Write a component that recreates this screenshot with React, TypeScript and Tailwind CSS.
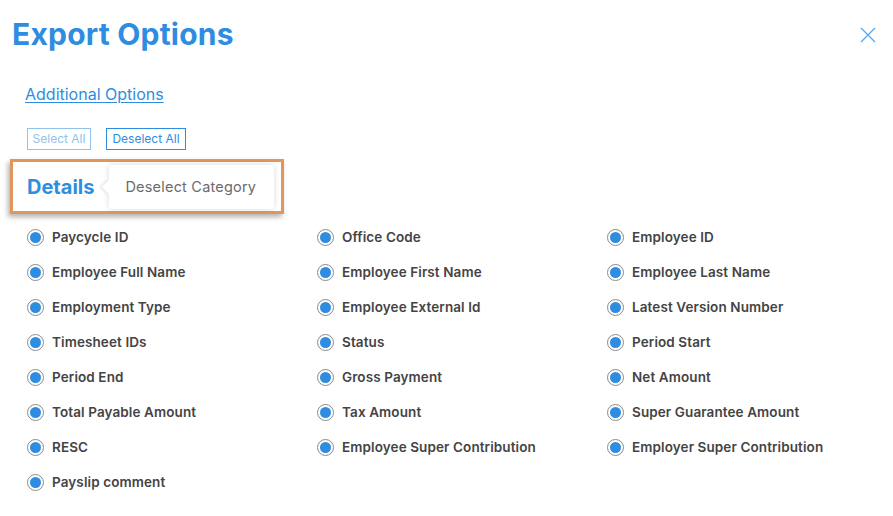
import React from 'react'

const fields = [
  'Paycycle ID',
  'Office Code',
  'Employee ID',
  'Employee Full Name',
  'Employee First Name',
  'Employee Last Name',
  'Employment Type',
  'Employee External Id',
  'Latest Version Number',
  'Timesheet IDs',
  'Status',
  'Period Start',
  'Period End',
  'Gross Payment',
  'Net Amount',
  'Total Payable Amount',
  'Tax Amount',
  'Super Guarantee Amount',
  'RESC',
  'Employee Super Contribution',
  'Employer Super Contribution',
  'Payslip comment',
]

const Radio = () => (
  <span className="flex h-[17px] w-[17px] shrink-0 items-center justify-center rounded-full border border-[#8a8a8a] bg-white">
    <span className="h-[11px] w-[11px] rounded-full bg-[#2e8de0]" />
  </span>
)

export default function App() {
  return (
    <div className="h-[516px] w-[893px] overflow-hidden bg-white font-['Inter',sans-serif]">
      <div className="flex items-start justify-between pl-[12px] pr-[17px] pt-[14px]">
        <h1 className="text-[30px] font-bold leading-[40px] tracking-[0.2px] text-[#2e8de0]">Export Options</h1>
        <svg className="mt-[13px] h-[16px] w-[16px]" viewBox="0 0 16 16" fill="none" stroke="#5aa9ec" strokeWidth="1.4">
          <path d="M1 1 L15 15 M15 1 L1 15" />
        </svg>
      </div>

      <div className="pl-[25px] pt-[28px]">
        <a className="text-[16px] leading-[20px] text-[#2e8de0] underline underline-offset-2">Additional Options</a>
      </div>

      <div className="flex gap-[15px] pl-[27px] pt-[22px]">
        <button className="h-[22px] w-[64px] border border-[#8fc3ee] text-[12px] text-[#8fc3ee]">Select All</button>
        <button className="h-[22px] w-[80px] border border-[#2e8de0] text-[12px] text-[#2e8de0]">Deselect All</button>
      </div>

      <div className="ml-[10px] mt-[9px] flex h-[55px] w-[274px] items-center border-[3px] border-[#e0965c] bg-white pl-[14px] shadow-[-2px_3px_5px_rgba(0,0,0,0.3)]">
        <span className="text-[20px] font-bold text-[#2e8de0]">Details</span>
        <div className="relative ml-[15px] flex h-[44px] w-[165px] items-center rounded-[3px] bg-white pl-[16px] shadow-[0_0_6px_rgba(0,0,0,0.15)]">
          <span className="absolute left-[-5px] top-[17px] h-[10px] w-[10px] rotate-45 bg-white shadow-[-2px_2px_3px_rgba(0,0,0,0.08)]" />
          <span className="relative text-[14.5px] tracking-[0.2px] text-[#6b6b6b]">Deselect Category</span>
        </div>
      </div>

      <div className="grid grid-cols-[290px_290px_290px] gap-y-[18px] pl-[27px] pt-[15px]">
        {fields.map((f) => (
          <label key={f} className="flex h-[17px] items-center gap-[8px]">
            <Radio />
            <span className="text-[13.5px] font-semibold tracking-[0.1px] text-[#444444]">{f}</span>
          </label>
        ))}
      </div>
    </div>
  )
}
